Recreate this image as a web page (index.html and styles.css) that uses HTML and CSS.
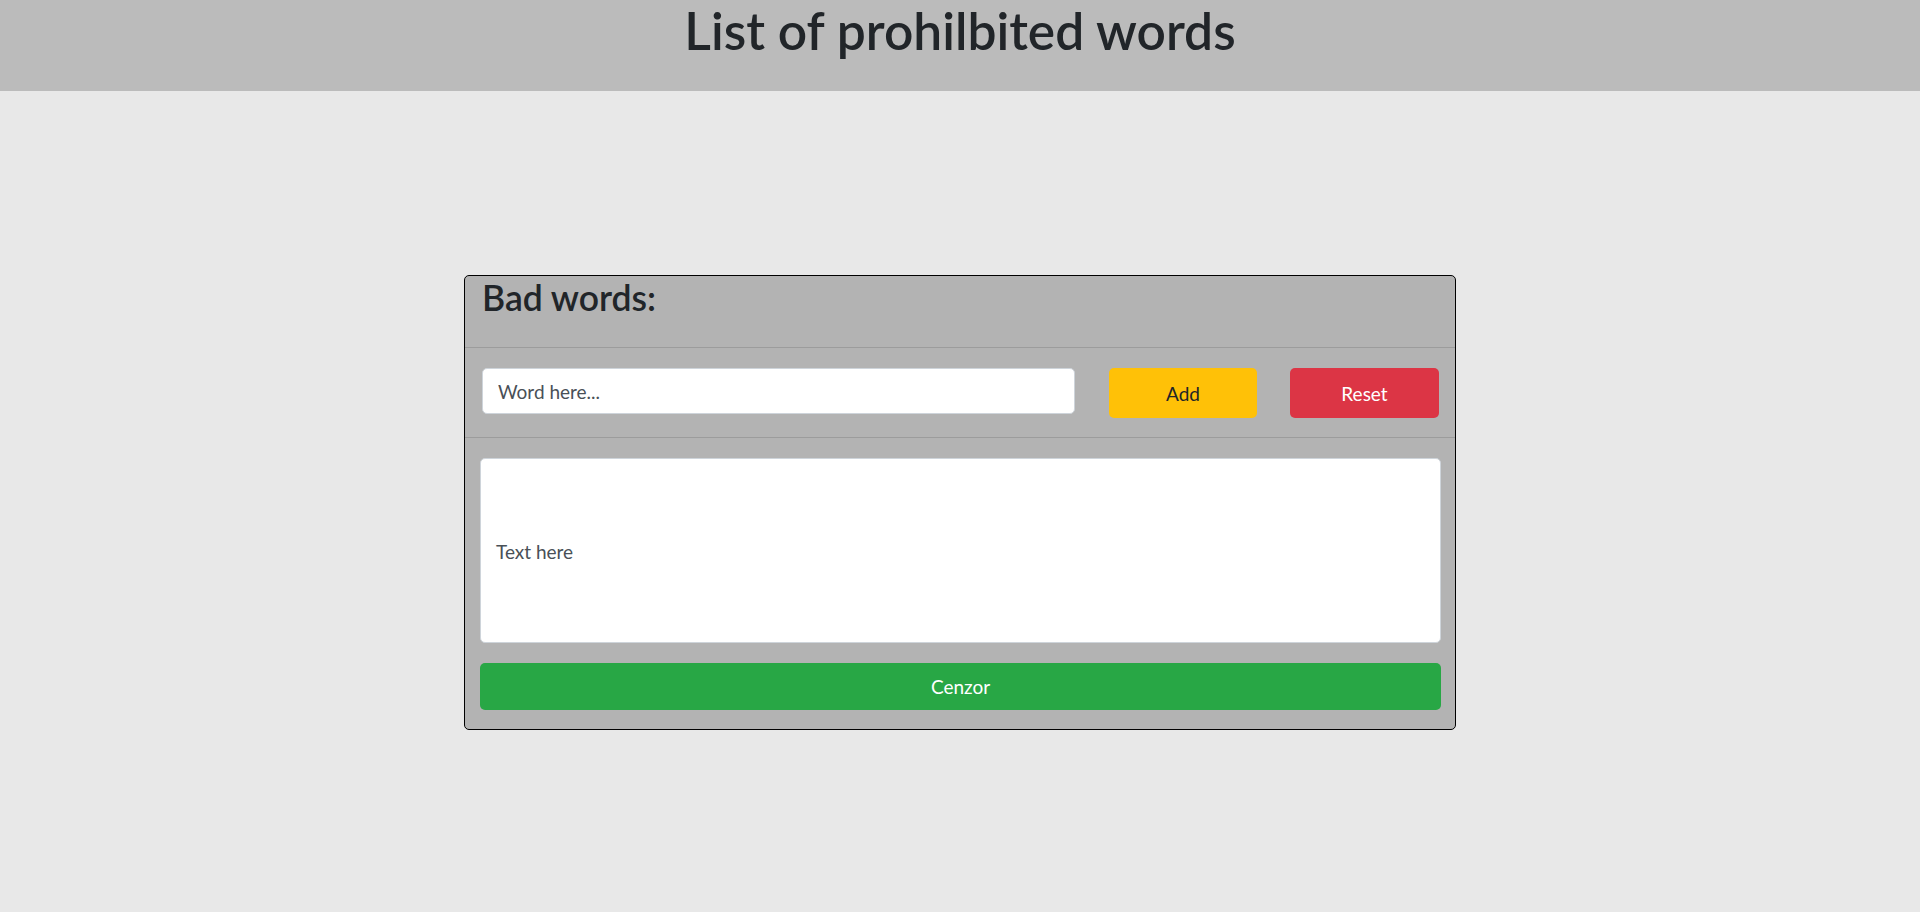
FILE: index.html
```html
<!DOCTYPE html>
<html lang="en">
<head>
<meta charset="utf-8">
<title>List of prohibited words</title>
<link rel="stylesheet" href="styles.css">
</head>
<body>
<header class="top">
  <h1 class="title">List of prohilbited words</h1>
</header>
<main class="main">
  <section class="card">
    <div class="card-head">
      <h2 class="card-title">Bad words:</h2>
    </div>
    <div class="card-row">
      <input class="word-input" type="text" placeholder="Word here...">
      <button class="btn btn-add" type="button">Add</button>
      <button class="btn btn-reset" type="button">Reset</button>
    </div>
    <div class="card-body">
      <div class="text-box"><span class="text-ph">Text here</span></div>
      <button class="btn btn-cenzor" type="button">Cenzor</button>
    </div>
  </section>
</main>
</body>
</html>
```
FILE: styles.css
```css
* { box-sizing: border-box; }
html, body { margin: 0; padding: 0; }
body {
  background: #e8e8e8;
  font-family: "Lato", "Open Sans", "Liberation Sans", sans-serif;
  color: #212529;
  height: 912px;
}
.top {
  background: #bbbbbb;
  height: 91px;
  text-align: center;
}
.title {
  margin: 0;
  font-size: 51.5px;
  font-weight: 600;
  line-height: 1.2;
  color: #212529;
}
.main {
  padding-top: 184px;
  display: flex;
  justify-content: center;
}
.card {
  width: 992px;
  background: #b3b3b3;
  border: 1px solid #000;
  border-radius: 5px;
  display: flex;
  flex-direction: column;
}
.card-head {
  height: 72px;
  padding: 0 17px;
  border-bottom: 1px solid rgba(0,0,0,0.125);
}
.card-title {
  margin: 0;
  font-size: 35.5px;
  font-weight: 600;
  line-height: 43px;
}
.card-row {
  display: flex;
  align-items: flex-start;
  padding: 20px 15px 19px 17px;
  border-bottom: 1px solid rgba(0,0,0,0.125);
}
.word-input {
  width: 593px;
  height: 46px;
  border: 1px solid #ced4da;
  border-radius: 5px;
  background: #fff;
  padding: 0 15px;
  font-family: inherit;
  font-size: 19px;
  color: #495057;
  outline: none;
}
.word-input::placeholder { color: #495057; opacity: 1; }
.btn {
  border: 0;
  border-radius: 5px;
  font-family: inherit;
  font-size: 19px;
  cursor: pointer;
}
.btn-add {
  margin-left: 34px;
  width: 148px;
  height: 50px;
  background: #ffc107;
  color: #212529;
}
.btn-reset {
  margin-left: 33px;
  width: 149px;
  height: 50px;
  background: #dc3545;
  color: #fff;
}
.card-body {
  padding: 20px 14px 19px 15px;
  display: flex;
  flex-direction: column;
  gap: 20px;
}
.text-box {
  height: 185px;
  background: #fff;
  border: 1px solid #ced4da;
  border-radius: 5px;
  display: flex;
  align-items: center;
  padding: 1px 15px 0;
}
.text-ph {
  font-size: 19px;
  color: #495057;
}
.btn-cenzor {
  width: 100%;
  height: 47px;
  background: #28a745;
  color: #fff;
}
```
